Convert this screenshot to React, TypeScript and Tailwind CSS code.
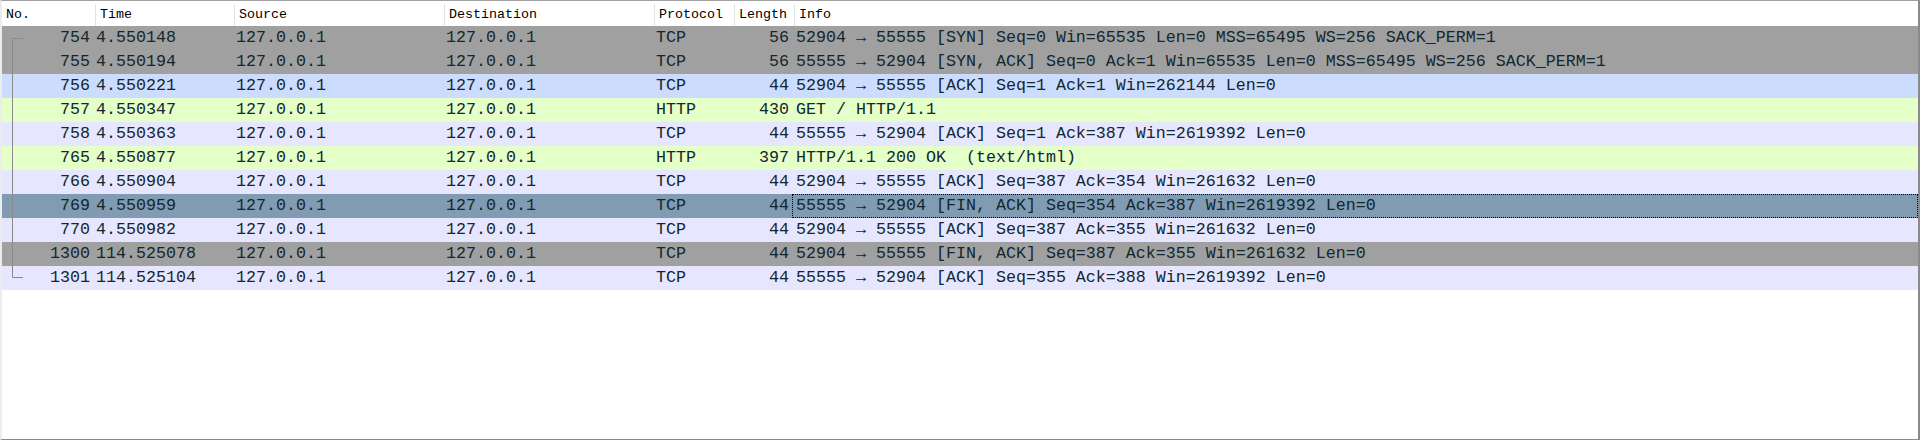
const rows = [
  { no: "754", time: "4.550148", proto: "TCP", len: "56", info: "52904 → 55555 [SYN] Seq=0 Win=65535 Len=0 MSS=65495 WS=256 SACK_PERM=1", kind: "syn" },
  { no: "755", time: "4.550194", proto: "TCP", len: "56", info: "55555 → 52904 [SYN, ACK] Seq=0 Ack=1 Win=65535 Len=0 MSS=65495 WS=256 SACK_PERM=1", kind: "syn" },
  { no: "756", time: "4.550221", proto: "TCP", len: "44", info: "52904 → 55555 [ACK] Seq=1 Ack=1 Win=262144 Len=0", kind: "hover" },
  { no: "757", time: "4.550347", proto: "HTTP", len: "430", info: "GET / HTTP/1.1", kind: "http" },
  { no: "758", time: "4.550363", proto: "TCP", len: "44", info: "55555 → 52904 [ACK] Seq=1 Ack=387 Win=2619392 Len=0", kind: "tcp" },
  { no: "765", time: "4.550877", proto: "HTTP", len: "397", info: "HTTP/1.1 200 OK  (text/html)", kind: "http" },
  { no: "766", time: "4.550904", proto: "TCP", len: "44", info: "52904 → 55555 [ACK] Seq=387 Ack=354 Win=261632 Len=0", kind: "tcp" },
  { no: "769", time: "4.550959", proto: "TCP", len: "44", info: "55555 → 52904 [FIN, ACK] Seq=354 Ack=387 Win=2619392 Len=0", kind: "selected" },
  { no: "770", time: "4.550982", proto: "TCP", len: "44", info: "52904 → 55555 [ACK] Seq=387 Ack=355 Win=261632 Len=0", kind: "tcp" },
  { no: "1300", time: "114.525078", proto: "TCP", len: "44", info: "52904 → 55555 [FIN, ACK] Seq=387 Ack=355 Win=261632 Len=0", kind: "syn" },
  { no: "1301", time: "114.525104", proto: "TCP", len: "44", info: "55555 → 52904 [ACK] Seq=355 Ack=388 Win=2619392 Len=0", kind: "tcp" },
];

const rowBg: Record<string, string> = {
  syn: "bg-[#a0a0a0]",
  tcp: "bg-[#e7e6ff]",
  http: "bg-[#e4ffc7]",
  hover: "bg-[#ccdcff]",
  selected: "bg-[#819cb2]",
};

const headers = [
  { label: "No.", w: "w-[93px]" },
  { label: "Time", w: "w-[139px] border-l border-[#e3e3e3]" },
  { label: "Source", w: "w-[210px] border-l border-[#e3e3e3]" },
  { label: "Destination", w: "w-[210px] border-l border-[#e3e3e3]" },
  { label: "Protocol", w: "w-[80px] border-l border-[#e3e3e3]" },
  { label: "Length", w: "w-[60px] border-l border-[#e3e3e3]" },
  { label: "Info", w: "flex-1 border-l border-[#e3e3e3]" },
];

export default function App() {
  return (
    <div className="w-[1920px] h-[440px] bg-white border-t border-t-[#a0a0a0] border-b border-b-[#8a8a8a] border-r-2 border-r-[#8a8a8a] border-l-2 border-l-[#ececec] overflow-hidden">
      <div className="flex h-[25px] text-black font-['Liberation_Mono',monospace] text-[13.33px] leading-[21px] pt-[3px]">
        {headers.map((h) => (
          <div key={h.label} className={`${h.w} shrink-0 pl-[4px] whitespace-nowrap`}>{h.label}</div>
        ))}
      </div>
      <div className="relative font-['Liberation_Mono',monospace] text-[16.67px] leading-[24px] text-[#12272e]">
        {rows.map((r) => (
          <div key={r.no} className={`flex h-[24px] whitespace-pre ${rowBg[r.kind]}`}>
            <div className="w-[91px] shrink-0 text-right pr-[3px]">{r.no}</div>
            <div className="w-[139px] shrink-0 pl-[3px]">{r.time}</div>
            <div className="w-[210px] shrink-0 pl-[4px]">127.0.0.1</div>
            <div className="w-[210px] shrink-0 pl-[4px]">127.0.0.1</div>
            <div className="w-[80px] shrink-0 pl-[4px]">{r.proto}</div>
            <div className="w-[60px] shrink-0 text-right pr-[3px]">{r.len}</div>
            {r.kind === "selected" ? (
              <div className="flex-1 pl-[3px] border border-dotted border-black leading-[22px]">{r.info}</div>
            ) : (
              <div className="flex-1 pl-[4px]">{r.info}</div>
            )}
          </div>
        ))}
        <svg className="absolute left-0 top-0" width="30" height="264" viewBox="0 0 30 264">
          <path d="M21 12.5H10.5V251.5H21" fill="none" stroke="#8a8a8a" strokeWidth="1" />
        </svg>
      </div>
    </div>
  );
}
